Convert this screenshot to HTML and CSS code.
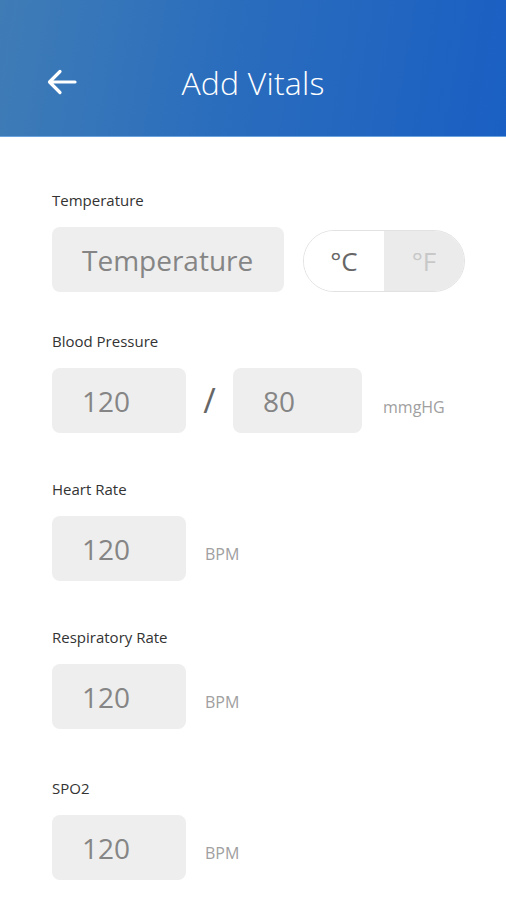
FILE: index.html
```html
<!DOCTYPE html>
<html lang="en">
<head>
    <meta charset="UTF-8">
    <meta name="viewport" content="width=device-width, initial-scale=1.0">
    <title>Add Vitals</title>
    <link rel="stylesheet" href="styles.css">
</head>
<body>
    <header class="top-bar">
        <span class="back-arrow">
            <svg width="32" height="28" viewBox="0 0 32 28">
                <path d="M29 14 H4 M14 3.5 L3.5 14 L14 24.5" fill="none" stroke="#fff" stroke-width="3.2" stroke-linecap="round" stroke-linejoin="round"/>
            </svg>
        </span>
        <h1>Add Vitals</h1>
    </header>

    <main class="vitals-form">
        <!-- Temperature -->
        <div class="field field-first">
            <p class="field-label">Temperature</p>
            <div class="field-row">
                <div class="input-box wide">Temperature</div>
                <div class="unit-toggle">
                    <span class="toggle-option active">°C</span>
                    <span class="toggle-option">°F</span>
                </div>
            </div>
        </div>

        <!-- Blood pressure -->
        <div class="field field-bp">
            <p class="field-label">Blood Pressure</p>
            <div class="field-row">
                <div class="input-box">120</div>
                <span class="slash">/</span>
                <div class="input-box bp-second">80</div>
                <span class="unit mmhg">mmgHG</span>
            </div>
        </div>

        <div class="field">
            <p class="field-label">Heart Rate</p>
            <div class="field-row">
                <div class="input-box">120</div>
                <span class="unit">BPM</span>
            </div>
        </div>

        <div class="field">
            <p class="field-label">Respiratory Rate</p>
            <div class="field-row">
                <div class="input-box">120</div>
                <span class="unit">BPM</span>
            </div>
        </div>

        <div class="field field-last">
            <p class="field-label">SPO2</p>
            <div class="field-row">
                <div class="input-box">120</div>
                <span class="unit">BPM</span>
            </div>
        </div>
    </main>
</body>
</html>
```

FILE: styles.css
```css
body {
    font-family: "Open Sans", Arial, sans-serif;
    background-color: #fff;
    color: #333;
    margin: 0;
    padding: 0;
}

.top-bar {
    height: 137px;
    background: linear-gradient(100deg, #3f7cb6 0%, #2a6dbd 45%, #1a5fc3 100%);
    display: flex;
    align-items: center;
    justify-content: center;
    position: relative;
    padding-top: 28px;
    box-sizing: border-box;
    border-bottom: 1px solid #6aa3de;
}

.top-bar h1 {
    margin: 0;
    color: #fff;
    font-weight: 300;
    font-size: 32px;
    letter-spacing: 0.2px;
}

.back-arrow {
    position: absolute;
    left: 46px;
    top: 68px;
    display: flex;
}

.vitals-form {
    padding: 0 0 0 52px;
}

.field {
    margin-top: 46px;
}

.field-first {
    margin-top: 53px;
}

.field-bp {
    margin-top: 39px;
}

.field-last {
    margin-top: 49px;
}

.field-label {
    margin: 0 0 17px 0;
    font-size: 15px;
    line-height: 20px;
    color: #333;
}

.field-row {
    display: flex;
    align-items: center;
}

.input-box {
    width: 134px;
    height: 65px;
    box-sizing: border-box;
    background-color: #eeeeee;
    border-radius: 8px;
    padding-left: 30px;
    display: flex;
    align-items: center;
    font-size: 28px;
    color: #858585;
}

.input-box.wide {
    width: 232px;
}

.bp-second {
    width: 129px;
}

.slash {
    width: 47px;
    text-align: center;
    font-size: 34px;
    color: #666;
    margin-top: -2px;
}

.unit {
    font-size: 16px;
    color: #a0a0a0;
    margin-left: 19px;
    padding-top: 11px;
}

.unit.mmhg {
    margin-left: 21px;
    padding-top: 13px;
}

.unit-toggle {
    margin-left: 19px;
    width: 162px;
    height: 62px;
    box-sizing: border-box;
    border: 1px solid #e2e2e2;
    border-radius: 31px;
    overflow: hidden;
    display: flex;
    margin-top: 2px;
}

.toggle-option {
    flex: 1;
    display: flex;
    align-items: center;
    justify-content: center;
    font-size: 26px;
    color: #c8c8c8;
    background-color: #ebebeb;
}

.toggle-option.active {
    background-color: #fff;
    color: #666;
}
```
